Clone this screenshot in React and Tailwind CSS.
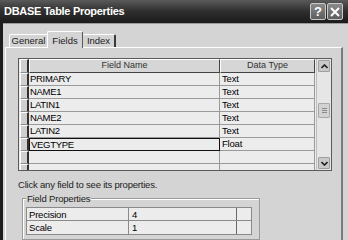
import React from "react";

const rows = [
  ["PRIMARY", "Text"],
  ["NAME1", "Text"],
  ["LATIN1", "Text"],
  ["NAME2", "Text"],
  ["LATIN2", "Text"],
  ["VEGTYPE", "Float"],
  ["", ""],
];

function Sel({ h = "h-[13px]" }) {
  return (
    <div className={`w-[9px] ${h} shrink-0 bg-[#cfcfcf] border-t border-l border-t-white border-l-white border-r-2 border-r-[#303030] border-b border-b-[#8a8a8a]`} />
  );
}

export default function App() {
  return (
    <div
      className="w-[348px] h-[240px] overflow-hidden flex flex-col bg-[#1e1e1e] text-black"
      style={{ fontFamily: '"Liberation Sans", Arial, sans-serif' }}
    >
      {/* title bar */}
      <div className="h-[23px] shrink-0 flex items-center justify-between pl-[4px] pr-[5px] bg-gradient-to-b from-[#5a5a5a] via-[#2e2e2e] to-[#1c1c1c]">
        <span className="text-white font-bold text-[11px] tracking-[-0.3px]">DBASE Table Properties</span>
        <div className="flex gap-[1px]">
          <div className="w-[16px] h-[17px] border border-[#c8c8c8] bg-gradient-to-b from-[#8a8a8a] to-[#5e5e5e] rounded-[2px] flex items-center justify-center text-white font-bold text-[13px] leading-none">?</div>
          <div className="w-[16px] h-[17px] border border-[#c8c8c8] bg-gradient-to-b from-[#8a8a8a] to-[#5e5e5e] rounded-[2px] flex items-center justify-center">
            <svg width="10" height="10" viewBox="0 0 10 10"><path d="M1 1L9 9M9 1L1 9" stroke="white" strokeWidth="2" /></svg>
          </div>
        </div>
      </div>
      {/* body */}
      <div className="flex-1 ml-[3px] bg-[#d4d4d4] border-t border-t-[#9a9a9a] flex flex-col">
        {/* tabs */}
        <div className="h-[21px] mt-[2px] flex items-end pl-[6px]">
          <div className="h-[13px] w-[39px] flex items-center justify-center border-t border-l border-white border-r border-r-[#7a7a7a] rounded-t-[2px] text-[9.5px] text-[#222]">General</div>
          <div className="h-[17px] w-[36px] -ml-[1px] flex items-start justify-center pt-[2px] border-t border-l border-white border-r border-r-[#5a5a5a] rounded-t-[2px] text-[9.5px] bg-[#d4d4d4] relative top-[1px] text-[#222]">Fields</div>
          <div className="h-[13px] w-[33px] flex items-center justify-center border-t border-white border-r-2 border-r-[#3a3a3a] rounded-t-[2px] text-[9.5px] text-[#222]">Index</div>
        </div>
        {/* panel */}
        <div className="flex-1 ml-[2px] mr-[5px] border-t border-l border-white border-r-2 border-r-[#7a7a7a] flex flex-col">
          {/* grid */}
          <div className="mt-[10px] ml-[12px] w-[314px] h-[113px] flex border border-[#5a5a5a] bg-[#ececec] overflow-hidden">
            <div className="w-[297px] flex flex-col overflow-hidden pl-[1px]">
              {/* header */}
              <div className="flex h-[14px] shrink-0">
                <Sel h="h-[14px]" />
                <div className="w-[191px] h-[14px] bg-[#d6d6d6] border-t border-l border-white border-r border-r-[#444] border-b border-b-[#444] text-[9px] text-[#333] flex items-center justify-center">Field Name</div>
                <div className="w-[95px] h-[14px] bg-[#d6d6d6] border-t border-l border-white border-r border-r-[#444] border-b border-b-[#444] text-[9px] text-[#333] flex items-center justify-center">Data Type</div>
              </div>
              {rows.map(([n, t], i) => {
                const sel = n === "VEGTYPE";
                return (
                  <div key={i} className="flex h-[13px] shrink-0">
                    <Sel />
                    <div className={`w-[191px] h-[13px] text-[9.5px] tracking-[-0.3px] leading-[12px] pl-[1px] ${sel ? "border border-[#111]" : "border-b border-b-[#9a9a9a] border-r border-r-[#9a9a9a]"}`}>{n}</div>
                    <div className="w-[95px] h-[13px] text-[9.5px] tracking-[-0.2px] leading-[12px] pl-[2px] border-b border-b-[#9a9a9a] border-r border-r-[#9a9a9a]">{t}</div>
                  </div>
                );
              })}
              <div className="flex h-[13px] shrink-0">
                <Sel />
                <div className="w-[191px] h-[13px] border-r border-r-[#9a9a9a]" />
                <div className="w-[95px] h-[13px] border-r border-r-[#9a9a9a]" />
              </div>
            </div>
            {/* scrollbar */}
            <div className="w-[15px] flex flex-col bg-[#e6e6e6] border-l border-l-[#bdbdbd] px-[1px] py-[1px]">
              <div className="h-[12px] bg-[#c9c9c9] border border-[#9e9e9e] rounded-[1px] flex items-center justify-center">
                <svg width="7" height="5" viewBox="0 0 7 5"><path d="M0.5 4L3.5 1L6.5 4" stroke="#222" strokeWidth="1.6" fill="none" /></svg>
              </div>
              <div className="h-[31px]" />
              <div className="h-[15px] bg-[#d2d2d2] border border-[#a8a8a8] rounded-[1px] flex flex-col items-center justify-center gap-[1px]">
                <div className="w-[5px] h-px bg-[#8a8a8a]" />
                <div className="w-[5px] h-px bg-[#8a8a8a]" />
                <div className="w-[5px] h-px bg-[#8a8a8a]" />
              </div>
              <div className="flex-1" />
              <div className="h-[12px] bg-[#c9c9c9] border border-[#9e9e9e] rounded-[1px] flex items-center justify-center">
                <svg width="7" height="5" viewBox="0 0 7 5"><path d="M0.5 1L3.5 4L6.5 1" stroke="#222" strokeWidth="1.6" fill="none" /></svg>
              </div>
            </div>
          </div>
          {/* hint */}
          <div className="mt-[7px] ml-[12px] text-[9.5px] tracking-[-0.2px] text-[#222] leading-[13px]">Click any field to see its properties.</div>
          {/* group box */}
          <div className="mt-[7px] ml-[16px] w-[238px] flex-1 border border-[#9a9a9a] shadow-[inset_1px_1px_0_#fff] relative">
            <span className="absolute -top-[7px] left-[3px] px-[1px] bg-[#d4d4d4] text-[9.5px] tracking-[-0.2px] leading-[13px] text-[#222]">Field Properties</span>
            <div className="mt-[8px] ml-[3px] w-[226px] border border-[#8a8a8a] bg-[#ececec] flex flex-col">
              {[["Precision", "4"], ["Scale", "1"]].map(([a, b], i) => (
                <div key={i} className={`flex h-[13px] ${i === 0 ? "border-b border-b-[#8a8a8a]" : ""}`}>
                  <div className="w-[102px] pl-[2px] text-[9.5px] tracking-[-0.2px] leading-[13px] border-r border-r-[#8a8a8a]">{a}</div>
                  <div className="w-[108px] pl-[3px] text-[9.5px] leading-[13px] border-r border-r-[#6a6a6a]">{b}</div>
                  <div className="flex-1" />
                </div>
              ))}
            </div>
          </div>
        </div>
      </div>
    </div>
  );
}
